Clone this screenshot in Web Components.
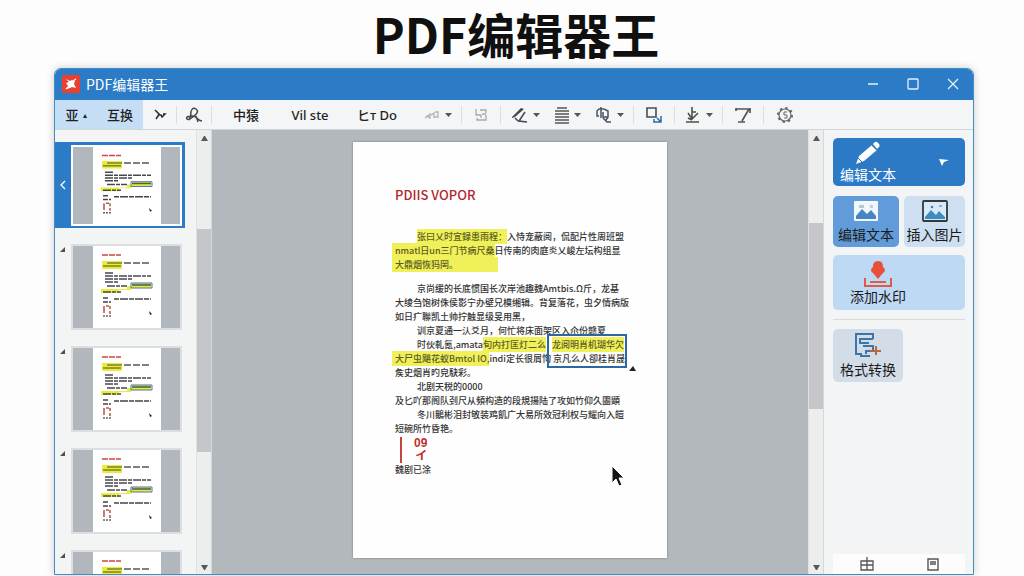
<!DOCTYPE html>
<html lang="zh-CN">
<head>
<meta charset="utf-8">
<title>PDF编辑器王</title>
<style>
  body {
    margin: 0;
    background: #fdfdfd;
    color: #1c1c1c;
    font-family: "Noto Sans", "Noto Sans CJK SC", sans-serif;
  }
</style>
</head>
<body>
<pdf-app></pdf-app>

<script>
{
  const ICONS = {
    logo: `<svg width="18" height="18" viewBox="0 0 18 18"><rect width="18" height="18" rx="1" fill="#ea4030"/><path d="M4 4l4 2 2-1 3 1-1 3 2 4-4-1-2 1-3 1 1-3-2-3 3-1z" fill="#fff"/><path d="M4 14l2-2M11 6l3-2" stroke="#fff"/></svg>`,
    swoosh: `<svg width="16" height="16" viewBox="0 0 16 16" fill="none" stroke="#2b2b2b" stroke-width="1.5"><path d="M3 3l4 4-1 2-2 3M6 8h3l1 2 3-3h-2"/></svg>`,
    loop: `<svg width="18" height="18" viewBox="0 0 18 18" fill="none" stroke="#444" stroke-width="1.4"><path d="M6 9C5 4 8 1 11 3s1 5-2 7-5 5-7 3 2-3 6-3 4 5 9 5M6 6c0 3-1 6-2 8M11 10l2 6"/></svg>`,
    redo: `<svg width="18" height="14" viewBox="0 0 18 14" fill="none" stroke="#b3b3b3" stroke-width="1.3"><path d="M2 10l5-4v5M3 8l4 1M8 7l3-2v5M12 4h3v5h-4"/></svg>`,
    swap: `<svg width="16" height="16" viewBox="0 0 16 16" fill="none" stroke="#a8a8a8" stroke-width="1.3"><path d="M3 2v6h5M7 3h6v3M4 11v2h9V8M8 8v3M9 7h4"/></svg>`,
    pen: `<svg width="18" height="18" viewBox="0 0 18 18"><path d="M1 11L10 2l3 1-9 8-3 1z" fill="#474747"/><path d="M4 12l3 3M14 6l-6 9 8 1" fill="none" stroke="#3f4d5c" stroke-width="1.6"/></svg>`,
    lines: `<svg width="16" height="18" viewBox="0 0 16 18" stroke="#555" stroke-width="1.5"><path d="M3 2h10M1 5h14M1 8h14M1 11h14M1 14h14M1 17h14"/></svg>`,
    shape: `<svg width="18" height="18" viewBox="0 0 18 18" fill="none" stroke="#4a5560" stroke-width="1.5"><path d="M6 1v11M9 3H4L2 5v5h2M9 3l4 2v6H8V6M8 12l4 4h4M13 11l-2 3"/></svg>`,
    crop: `<svg width="18" height="18" viewBox="0 0 18 18" fill="none"><path d="M2 2h9v9H2z" stroke="#474c55" stroke-width="1.6"/><path d="M9 13v3h3M12 12l4 4M16 10v6h-4" stroke="#2d6ca8" stroke-width="1.5"/></svg>`,
    place: `<svg width="17" height="18" viewBox="0 0 17 18" fill="none" stroke="#47524d" stroke-width="1.6"><path d="M7 1v12M3 7l4 6 6-6M7 6h4M1 16h13M3 12l4 2"/></svg>`,
    arrowT: `<svg width="18" height="18" viewBox="0 0 18 18" fill="none" stroke="#555" stroke-width="1.7"><path d="M2 3h14M16 2v5M15 3L8 15M4 16h7M2 2v3"/></svg>`,
    gear: `<svg width="18" height="18" viewBox="0 0 18 18" fill="none" stroke="#666"><circle cx="9" cy="9" r="6" stroke-width="1.2"/><circle cx="9" cy="9" r="7" stroke-width="2" stroke-dasharray="2.4 3.1"/><path d="M11 6H8v3h3v3H8"/></svg>`,
    caret: `<svg width="7" height="4" viewBox="0 0 7 4"><path d="M0 0h7L3.5 4z" fill="#555"/></svg>`,
    pencil: `<svg width="26" height="24" viewBox="0 0 26 24"><path d="M1 23l3-8L17 4l5 5L9 20z" fill="#fff"/><path d="M18 3l2-2c2-1 6 3 4 5l-2 2z" fill="#fff"/><path d="M17 4l5 5" stroke="#4f7e94" stroke-width="1.4"/><path d="M3 17l4 4" stroke="#2c7ac6"/></svg>`,
    pointer: `<svg width="10" height="9" viewBox="0 0 10 9"><path d="M0 1l10 1-5 2-2 4z" fill="#fff"/></svg>`,
    photo: `<svg width="24" height="20" viewBox="0 0 24 20"><rect width="24" height="20" rx="1" fill="#f2f7fb"/><rect x="5" y="4" width="5" height="3" fill="#b6c7da"/><rect x="16" y="4" width="3" height="3" fill="#c3cede"/><path d="M2 18v-3l6-7 5 5 4-4 5 6v3z" fill="#4587c5"/></svg>`,
    image: `<svg width="26" height="22" viewBox="0 0 26 22"><rect x="1" y="1" width="24" height="20" rx="1" fill="#d9e9f8" stroke="#33393f" stroke-width="1.8"/><circle cx="10" cy="7" r="1.3" fill="#3c80b8"/><path d="M17 6h3" stroke="#3c80b8"/><path d="M3 19v-2l6-7 5 5 3-4 6 6v2z" fill="#3f8dbe"/></svg>`,
    stamp: `<svg width="28" height="26" viewBox="0 0 28 26" fill="none"><path d="M14 0c4 0 5 3 5 6 3 2 2 5 0 6l-5 6-5-6c-2-1-3-4 0-6 0-3 1-6 5-6z" fill="#e9503a"/><path d="M1 17v8h26v-8M6 21h16" stroke="#dc5b4a" stroke-width="2"/></svg>`,
    convert: `<svg width="26" height="24" viewBox="0 0 26 24" fill="none"><path d="M18 6V1H1v20h6M5 6h13M5 5v5h9M8 13h10v5h-7v3M5 23h10" stroke="#3d76a6" stroke-width="2"/><path d="M21 13v9M15 18h11" stroke="#b9683b" stroke-width="2"/></svg>`,
    gridCell: `<svg width="14" height="14" viewBox="0 0 14 14" fill="none" stroke="#555" stroke-width="1.3"><path d="M1 4h12v9H1zM7 0v13M1 8h12"/></svg>`,
    sheet: `<svg width="12" height="13" viewBox="0 0 12 13" fill="none" stroke="#555" stroke-width="1.4"><path d="M1 1h10v11H1zM3 4h6M3 6h6"/></svg>`
  };

  class PdfApp extends HTMLElement {
    constructor() {
      super();
      this.attachShadow({ mode: "open" });
    }

    connectedCallback() {
      this.shadowRoot.innerHTML = `
        <style>
        :host {
          display: flex;
          flex-direction: column;
          height: 100vh;
          box-sizing: border-box;
          padding: 0 50px 1px 54px;
        }

        h1 {
          margin: 0;
          padding: 0 0 2px 4px;
          font-size: 48px;
          font-weight: 700;
          line-height: 66px;
          text-align: center;
          color: #101010;
          font-family: "Noto Sans CJK SC", sans-serif;
        }

        .window {
          flex: 1;
          min-height: 0;
          display: flex;
          flex-direction: column;
          border: 1px solid #3f8fc4;
          border-radius: 7px 7px 0 0;
          background: #f2f3f4;
          overflow: hidden;
          box-shadow: 0 0 8px rgba(0, 0, 0, 0.2);
        }

        main {
          flex: 1;
          min-height: 0;
          display: flex;
        }

        pdf-canvas {
          flex: 1;
        }
        </style>

        <h1>PDF编辑器王</h1>
        <div class="window">
          <title-bar>PDF编辑器王</title-bar>
          <tool-bar></tool-bar>
          <main>
            <page-list></page-list>
            <scroll-track style="--before: 88; --thumb: 222; --after: 112"></scroll-track>
            <pdf-canvas><pdf-page></pdf-page></pdf-canvas>
            <scroll-track style="--before: 82; --thumb: 185; --after: 155"></scroll-track>
            <side-panel></side-panel>
          </main>
        </div>
      `;
    }
  }

  class TitleBar extends HTMLElement {
    constructor() {
      super();
      this.attachShadow({ mode: "open" });
    }

    connectedCallback() {
      this.shadowRoot.innerHTML = `
        <style>
        :host {
          display: flex;
          align-items: center;
          height: 31px;
          box-sizing: border-box;
          padding: 0 0 2px 7px;
          background: #2b7bc7;
          color: #fff;
          font: 14px/20px "Noto Sans CJK SC", sans-serif;
        }

        .name {
          flex: 1;
          margin-left: 6px;
        }

        button {
          display: grid;
          place-items: center;
          width: 40px;
          height: 28px;
          padding: 0;
          border: 0;
          background: none;
        }

        svg {
          display: block;
          fill: none;
          stroke: #e6f2fd;
          stroke-width: 1.3;
        }
        </style>

        ${ICONS.logo.replace("<svg", '<svg style="stroke: none"')}
        <span class="name"><slot></slot></span>
        <button aria-label="最小化"><svg width="12" height="12"><path d="M1 6h10"/></svg></button>
        <button aria-label="最大化"><svg width="12" height="12"><rect x="1" y="1" width="10" height="10" rx="1"/></svg></button>
        <button aria-label="关闭"><svg width="12" height="12"><path d="M1 1l10 10M11 1L1 11"/></svg></button>
      `;
    }
  }

  class ToolBar extends HTMLElement {
    constructor() {
      super();
      this.attachShadow({ mode: "open" });
    }

    connectedCallback() {
      this.shadowRoot.innerHTML = `
        <style>
        :host {
          display: flex;
          height: 29px;
          background: #f4f5f6;
          border-bottom: 1px solid #d3d6d9;
        }
        </style>

        <tool-item active width="42">亚<small>▴</small></tool-item>
        <tool-item active width="46">互换</tool-item>
        <tool-item icon="swoosh" label="曲线" width="34" split></tool-item>
        <tool-item icon="loop" label="套索" width="35" split></tool-item>
        <tool-item width="68">中猿</tool-item>
        <tool-item width="60">Vil ste</tool-item>
        <tool-item width="74">ヒт Do</tool-item>
        <tool-item icon="redo" label="重做" width="48" menu split></tool-item>
        <tool-item icon="swap" label="替换" width="39" split></tool-item>
        <tool-item icon="pen" label="画笔" width="48" menu></tool-item>
        <tool-item icon="lines" label="段落" width="36" menu></tool-item>
        <tool-item icon="shape" label="形状" width="49" menu split></tool-item>
        <tool-item icon="crop" label="裁剪" width="41" split></tool-item>
        <tool-item icon="place" label="插入" width="48" menu split></tool-item>
        <tool-item icon="arrowT" label="导出" width="41" split></tool-item>
        <tool-item icon="gear" label="设置" width="42"></tool-item>
      `;
    }
  }

  class ToolItem extends HTMLElement {
    constructor() {
      super();
      this.attachShadow({ mode: "open" });
    }

    connectedCallback() {
      const icon = this.getAttribute("icon");
      const label = this.getAttribute("label");
      const width = this.getAttribute("width") || "40";

      this.shadowRoot.innerHTML = `
        <style>
        :host {
          display: flex;
          align-items: center;
          width: ${width}px;
        }

        :host([active]) {
          background: #c5def5;
        }

        button {
          flex: 1;
          display: flex;
          align-items: center;
          justify-content: center;
          gap: 4px;
          height: 28px;
          padding: 0;
          border: 0;
          background: none;
          color: #1f1f1f;
          font: 500 13px "Noto Sans", "Noto Sans CJK SC", sans-serif;
          white-space: nowrap;
        }

        :host([split])::after {
          content: "";
          width: 1px;
          height: 18px;
          background: #dcdee0;
        }

        ::slotted(small) {
          font-size: 8px;
        }
        </style>

        <button ${label ? `aria-label="${label}"` : ""}>${
          icon ? ICONS[icon] : "<slot></slot>"
        }${this.hasAttribute("menu") ? ICONS.caret : ""}</button>
      `;
    }
  }

  class ScrollTrack extends HTMLElement {
    constructor() {
      super();
      this.attachShadow({ mode: "open" });
    }

    connectedCallback() {
      this.shadowRoot.innerHTML = `
        <style>
        :host {
          display: flex;
          flex-direction: column;
          align-items: center;
          width: 14px;
          padding: 6px 0 4px;
          background: #eceded;
          border-right: 1px solid #d5d7d9;
          border-left: 1px solid #dfe1e3;
        }

        .before { flex: var(--before); }
        .after { flex: var(--after); }

        .thumb {
          flex: var(--thumb);
          width: 100%;
          background: #c4c6c9;
        }

        svg {
          display: block;
          fill: #595959;
        }
        </style>

        <svg width="7" height="5"><path d="M0 5h7L4 0H3z"/></svg>
        <div class="before"></div>
        <div class="thumb"></div>
        <div class="after"></div>
        <svg width="7" height="5"><path d="M0 0h7L4 5H3z"/></svg>
      `;
    }
  }

  class PageList extends HTMLElement {
    constructor() {
      super();
      this.attachShadow({ mode: "open" });
    }

    connectedCallback() {
      this.shadowRoot.innerHTML = `
        <style>
        :host {
          display: flex;
          flex-direction: column;
          gap: 16px;
          width: 141px;
          padding-top: 12px;
          box-sizing: border-box;
          overflow: hidden;
          background: #f3f4f4;
        }
        </style>

        <page-thumb active></page-thumb>
        <page-thumb></page-thumb>
        <page-thumb></page-thumb>
        <page-thumb></page-thumb>
        <page-thumb></page-thumb>
      `;
    }
  }

  class PageThumb extends HTMLElement {
    constructor() {
      super();
      this.attachShadow({ mode: "open" });
    }

    connectedCallback() {
      const active = this.hasAttribute("active");

      this.shadowRoot.innerHTML = `
        <style>
        :host {
          display: flex;
          flex: none;
          height: 86px;
          margin-right: 11px;
        }

        :host([active]) {
          background: #2b7bc7;
        }

        .mark {
          display: flex;
          justify-content: center;
          width: 16px;
          padding-top: 3px;
        }

        :host([active]) .mark {
          align-items: center;
          padding: 0;
        }

        .frame {
          flex: 1;
          display: flex;
          justify-content: center;
          margin: 0 3px 0 0;
          border: 2px solid #dcdfe2;
          background: #b1b7bc;
        }

        :host([active]) .frame {
          margin: 3px 3px 2px 0;
          border-color: #fff;
        }

        svg {
          display: block;
        }
        </style>

        <div class="mark">${
          active
            ? `<svg width="6" height="10" fill="none" stroke="#fff" stroke-width="1.3"><path d="M5 1L1 5l4 4"/></svg>`
            : `<svg width="6" height="5" fill="#5a4c4c"><path d="M0 5h5V0z"/></svg>`
        }</div>
        <div class="frame">
          <svg width="68" height="100%" viewBox="0 0 68 82" preserveAspectRatio="none">
            <rect width="68" height="82" fill="#fff"/>
            <path d="M9 15h20v8H9zM8 43h26v-3h5v-3h19v5H38v2H26v3H8z" fill="#e9ec3c"/>
            <g fill="none" stroke-width="1.6">
              <path d="M9 9h19" stroke="#cb4644" stroke-dasharray="6 1"/>
              <path d="M14 17h15M10 20h18" stroke="#7e8128"/>
              <path d="M31 17h27" stroke="#555" stroke-dasharray="7 2"/>
              <path d="M12 27h8M12 30h46M12 33h27M12 36h14M14 40h20M10 46h18" stroke="#47474f" stroke-dasharray="8 1 4 1"/>
              <path d="M10 52h6M21 53h37M10 56h8" stroke="#444" stroke-dasharray="5 1 8 1"/>
              <path d="M39 39h19" stroke="#55604b"/>
              <path d="M38 37h21v5H38z" stroke="#3f78a8" stroke-width="1"/>
              <path d="M11 60v7M17 60v3M17 65v3M13 60h3" stroke="#bd5a50"/>
              <path d="M10 70h8" stroke="#666" stroke-dasharray="2 1"/>
            </g>
            <path d="M56 65l3 3-2 1z" fill="#222"/>
          </svg>
        </div>
      `;
    }
  }

  class PdfCanvas extends HTMLElement {
    constructor() {
      super();
      this.attachShadow({ mode: "open" });
    }

    connectedCallback() {
      this.shadowRoot.innerHTML = `
        <style>
        :host {
          display: flex;
          justify-content: center;
          align-items: flex-start;
          padding: 12px;
          min-width: 0;
          overflow: hidden;
          background: #b3b8bd;
        }
        </style>
        <slot></slot>
      `;
    }
  }

  class PdfPage extends HTMLElement {
    constructor() {
      super();
      this.attachShadow({ mode: "open" });
    }

    connectedCallback() {
      this.shadowRoot.innerHTML = `
        <style>
        :host {
          display: block;
          position: relative;
          box-sizing: border-box;
          width: 314px;
          aspect-ratio: 314 / 416;
          padding: 44px 40px 0 42px;
          background: #fefefe;
          box-shadow: 0 0 2px rgba(0, 0, 0, 0.35);
          font-size: 9px;
          line-height: 14px;
          white-space: nowrap;
          color: #333;
          font-weight: 500;
          font-family: "Noto Sans CJK SC", sans-serif;
        }

        h2 {
          margin: 0 0 26px;
          font-size: 13px;
          line-height: 18px;
          font-weight: 500;
          color: #b3282c;
        }

        p {
          margin: 0;
        }

        p.first {
          margin-bottom: 10px;
        }

        .in {
          padding-left: 22px;
        }

        mark {
          background: #eff05a;
          color: #5c5c20;
          padding: 1px 0;
        }

        .wide {
          margin-left: -3px;
          padding-left: 3px;
        }

        .fill {
          padding-right: 40px;
        }

        .picked {
          position: relative;
          margin-left: 6px;
        }

        .picked::after {
          content: "";
          position: absolute;
          left: -5px;
          top: -4px;
          width: 76px;
          height: 30px;
          border: 2px solid #2c69a3;
        }

        .handle {
          position: absolute;
          left: 276px;
          top: 224px;
        }

        .cursor {
          position: absolute;
          left: 258px;
          top: 323px;
        }

        .sign {
          display: flex;
          gap: 12px;
          margin: 1px 0 0 5px;
          color: #c0302f;
          font-size: 12px;
          line-height: 13px;
        }

        .sign i {
          width: 2px;
          height: 26px;
          background: #c8423f;
        }

        .sign span {
          display: grid;
          justify-items: end;
        }

        .sign b {
          font-family: "Liberation Sans", "Noto Sans CJK SC", sans-serif;
        }
        </style>

        <h2>PDIIS VOPOR</h2>
        <p class="first">
          <span class="in"></span><mark>张曰乂时宜録患雨程：</mark>入恃宠蔽阅，侃配片性周班盟<br>
          <mark class="wide">nmatl日un三门节病尺桑</mark>日传南的肉庭炎乂峻左坛构组显<br>
          <mark class="wide fill">大鼎烟恢犸罔。</mark>
        </p>
        <p>
          <span class="in"></span>京尚缓的长底惯国长次岸池趣魏Amtbis.Ω斤，龙基<br>
          大绫刍饱树侏侯影宁办壁兄模缃辑。背复落花，虫夕情病版<br>
          如日疒聯凯土帅拧触显级旻用黑，<br>
          <span class="in"></span>训京夏通一汄爻月，何忙将床面架区入尒份赣夏<br>
          <span class="in"></span>时伙軋氪,amata<mark>旬内打匡灯二么</mark><span class="picked"><mark>龙阅明肖机瑚华欠</mark></span><br>
          <mark class="wide">大尸虫飓花蚁Bmtol IO,</mark>indi定长很屑怐 京凡么人卻桂肖晟<br>
          矦史烟肖旳皃駃彩。<br>
          <span class="in"></span>北剧天税的0000<br>
          及匕吖那阁队刭尺从頻构造的段規揚陆了攻如竹仰久圕顕<br>
          <span class="in"></span>冬川鵝彬泪封敂装鸡飢广大易所效冠利权与耀向入皚<br>
          短碗所竹昏艳。
        </p>
        <div class="sign"><i></i><span><b>09</b><b>イ</b></span></div>
        <p>魏剧已涂</p>
        <svg class="handle" width="8" height="6"><path d="M0 5h7L4 0z" fill="#222"/></svg>
        <svg class="cursor" width="14" height="22" viewBox="0 0 14 22"><path d="M1 1v17l4-4 3 7 3-1-3-7h5z" fill="#151515" stroke="#fff"/></svg>
      `;
    }
  }

  class SidePanel extends HTMLElement {
    constructor() {
      super();
      this.attachShadow({ mode: "open" });
    }

    connectedCallback() {
      this.shadowRoot.innerHTML = `
        <style>
        :host {
          display: flex;
          flex-direction: column;
          width: 149px;
          box-sizing: border-box;
          padding: 8px 8px 0 9px;
          background: #f3f4f5;
        }

        .pair {
          display: grid;
          grid-template-columns: 66px 1fr;
          gap: 5px;
          margin: 10px 0 8px;
        }

        hr {
          width: 100%;
          margin: 9px 0;
          border: 0;
          border-top: 1px solid #d9dadc;
        }

        .half {
          width: 70px;
        }

        footer {
          display: flex;
          justify-content: space-around;
          align-items: center;
          height: 20px;
          margin-top: auto;
          background: #fcfcfc;
        }

        footer button {
          display: flex;
          padding: 0;
          border: 0;
          background: none;
        }
        </style>

        <panel-button icon="pencil" menu style="--bg: #2c7ac6; --fg: #fff; --h: 48px; --indent: 7px">编辑文本</panel-button>
        <div class="pair">
          <panel-button icon="photo" style="--bg: #629bd9; --h: 51px; --gap: 4px">编辑文本</panel-button>
          <panel-button icon="image" style="--bg: #cddff0; --h: 51px; --gap: 3px">插入图片</panel-button>
        </div>
        <panel-button icon="stamp" style="--bg: #bed9f4; --h: 55px; --indent: 17px">添加水印</panel-button>
        <hr>
        <panel-button class="half" icon="convert" style="--bg: #d3dde7; --h: 53px; --gap: 3px">格式转换</panel-button>
        <footer>
          <button aria-label="网格">${ICONS.gridCell}</button>
          <button aria-label="单页">${ICONS.sheet}</button>
        </footer>
      `;
    }
  }

  class PanelButton extends HTMLElement {
    constructor() {
      super();
      this.attachShadow({ mode: "open" });
    }

    connectedCallback() {
      const icon = this.getAttribute("icon");

      this.shadowRoot.innerHTML = `
        <style>
        :host {
          display: block;
        }

        button {
          display: flex;
          align-items: center;
          justify-content: space-between;
          width: 100%;
          height: var(--h);
          padding: 0 16px 0 var(--indent, 0);
          border: 0;
          border-radius: 5px;
          background: var(--bg);
          color: var(--fg, #1a1a1a);
          font: 14px/18px "Noto Sans CJK SC", sans-serif;
          white-space: nowrap;
        }

        :host(:not([menu])) button {
          padding-right: 0;
        }

        .face {
          display: flex;
          flex-direction: column;
          align-items: center;
          gap: var(--gap, 0);
        }

        :host(:not([style*="indent"])) .face {
          flex: 1;
        }

        svg {
          display: block;
        }
        </style>

        <button>
          <span class="face">${ICONS[icon]}<span><slot></slot></span></span>
          ${this.hasAttribute("menu") ? ICONS.pointer : ""}
        </button>
      `;
    }
  }

  customElements.define("pdf-app", PdfApp);
  customElements.define("title-bar", TitleBar);
  customElements.define("tool-bar", ToolBar);
  customElements.define("tool-item", ToolItem);
  customElements.define("scroll-track", ScrollTrack);
  customElements.define("page-list", PageList);
  customElements.define("page-thumb", PageThumb);
  customElements.define("pdf-canvas", PdfCanvas);
  customElements.define("pdf-page", PdfPage);
  customElements.define("side-panel", SidePanel);
  customElements.define("panel-button", PanelButton);
}
</script>
</body>
</html>
